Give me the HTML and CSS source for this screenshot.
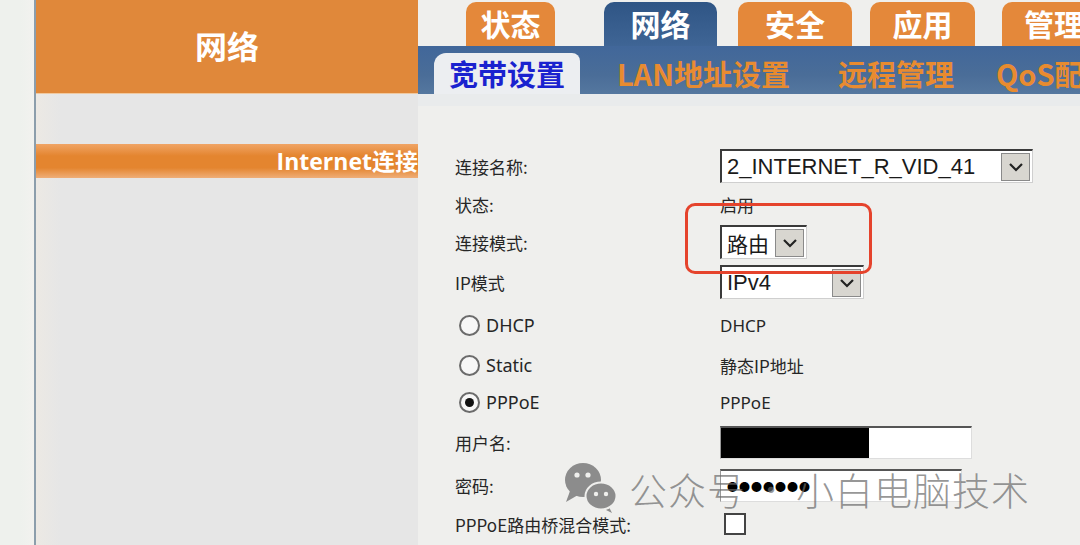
FILE: index.html
```html
<!DOCTYPE html>
<html lang="zh-CN">
<head>
    <meta charset="UTF-8">
    <title>宽带设置</title>
    <link rel="stylesheet" href="styles.css">
</head>
<body>
    <div class="page">
        <div class="gutter"></div>

        <aside class="side">
            <div class="side-head">网络</div>
            <div class="side-body">
                <div class="side-item">Internet连接</div>
            </div>
        </aside>

        <main class="main">
            <nav class="tabs">
                <div class="tab">状态</div>
                <div class="tab active">网络</div>
                <div class="tab">安全</div>
                <div class="tab">应用</div>
                <div class="tab">管理</div>
            </nav>
            <nav class="subtabs">
                <div class="subtab active">宽带设置</div>
                <div class="subtab">LAN地址设置</div>
                <div class="subtab">远程管理</div>
                <div class="subtab">QoS配置</div>
            </nav>
            <div class="sub-strip"></div>

            <form class="form">
                <div class="label r1">连接名称:</div>
                <div class="value r1">
                    <div class="select w-name">
                        <span>2_INTERNET_R_VID_41</span>
                        <span class="arrow"><svg width="16" height="10" viewBox="0 0 16 10"><path d="M2 2 L8 8 L14 2" fill="none" stroke="#222" stroke-width="2.2"/></svg></span>
                    </div>
                </div>

                <div class="label r2">状态:</div>
                <div class="value r2 text">启用</div>

                <div class="label r3">连接模式:</div>
                <div class="value r3">
                    <div class="select w-mode">
                        <span class="cjk">路由</span>
                        <span class="arrow"><svg width="16" height="10" viewBox="0 0 16 10"><path d="M2 2 L8 8 L14 2" fill="none" stroke="#222" stroke-width="2.2"/></svg></span>
                    </div>
                </div>

                <div class="label r4">IP模式</div>
                <div class="value r4">
                    <div class="select w-ip">
                        <span>IPv4</span>
                        <span class="arrow"><svg width="16" height="10" viewBox="0 0 16 10"><path d="M2 2 L8 8 L14 2" fill="none" stroke="#222" stroke-width="2.2"/></svg></span>
                    </div>
                </div>

                <div class="label r5 radio-row"><span class="radio"></span>DHCP</div>
                <div class="value r5 text latin">DHCP</div>

                <div class="label r6 radio-row"><span class="radio"></span>Static</div>
                <div class="value r6 text">静态IP地址</div>

                <div class="label r7 radio-row"><span class="radio checked"></span>PPPoE</div>
                <div class="value r7 text latin">PPPoE</div>

                <div class="label r8">用户名:</div>
                <div class="value r8">
                    <div class="input w-user"><span class="redact"></span></div>
                </div>

                <div class="label r9">密码:</div>
                <div class="value r9">
                    <div class="input w-pass"><span class="dots">●●●●●●●</span></div>
                </div>

                <div class="label r10">PPPoE路由桥混合模式:</div>
                <div class="value r10"><span class="checkbox"></span></div>
            </form>
        </main>

        <!-- 标注框和水印 -->
        <div class="mark-box"></div>
        <div class="watermark">
            <svg class="wx" width="60" height="56" viewBox="0 0 60 56">
                <path d="M9 31 L5 42 L17 35 Z" fill="#8c8c8c"/>
                <ellipse cx="22" cy="20" rx="18" ry="17" fill="#8c8c8c"/>
                <circle cx="16" cy="15" r="2.6" fill="#efefed"/>
                <circle cx="27" cy="15" r="2.6" fill="#efefed"/>
                <path d="M47 45 L51 53 L41 48 Z" fill="#8c8c8c"/>
                <ellipse cx="40" cy="36" rx="15.5" ry="13.5" fill="#8c8c8c" stroke="#efefed" stroke-width="2"/>
                <circle cx="35" cy="34" r="2.2" fill="#efefed"/>
                <circle cx="45" cy="34" r="2.2" fill="#efefed"/>
            </svg>
            <span class="wm-text">公众号</span>
            <span class="wm-sep">·</span>
            <span class="wm-text">小白电脑技术</span>
        </div>
    </div>
</body>
</html>
```

FILE: styles.css
```css
* {
    margin: 0;
    padding: 0;
    box-sizing: border-box;
}

body {
    width: 1080px;
    height: 545px;
    overflow: hidden;
    background-color: #edf0ec;
    font-family: "Noto Sans CJK SC", "Noto Sans", sans-serif;
}

.page {
    position: relative;
    display: flex;
    height: 545px;
}

.gutter {
    width: 34px;
    background: linear-gradient(90deg, #eef1ed 0, #eef1ed 20px, #f2f2ef 34px);
    border-right: 2px solid #8c9eac;
    flex: 0 0 36px;
}

/* 左侧菜单 */
.side {
    width: 382px;
    flex: 0 0 382px;
    display: flex;
    flex-direction: column;
    background-color: #e6e6e6;
}

.side-head {
    height: 94px;
    background-color: #e0883a;
    color: #fff;
    font-size: 32px;
    font-weight: bold;
    display: flex;
    align-items: center;
    justify-content: center;
    padding-bottom: 4px;
    border-bottom: 1px solid #f0c9a0;
}

.side-body {
    flex: 1;
    padding-top: 50px;
    background: linear-gradient(90deg, #ece9e4 0, #e6e6e6 24px);
}

.side-item {
    height: 34px;
    background: linear-gradient(#f0a465, #e4852f 35%, #e4852f 70%, #efae78);
    color: #fff;
    font-family: "Open Sans", "Noto Sans CJK SC", sans-serif;
    font-size: 23px;
    font-weight: bold;
    text-align: right;
    line-height: 34px;
    white-space: nowrap;
    overflow: hidden;
}

/* 右侧内容 */
.main {
    flex: 1;
    background-color: #efefed;
    display: flex;
    flex-direction: column;
}

.tabs {
    height: 46px;
    display: flex;
    align-items: flex-end;
    padding-left: 48px;
    white-space: nowrap;
    overflow: hidden;
}

.tab {
    flex: 0 0 auto;
    height: 44px;
    background-color: #e4883a;
    border-radius: 10px 10px 0 0;
    color: #fff;
    font-size: 30px;
    font-weight: bold;
    display: flex;
    align-items: center;
    justify-content: center;
    padding-bottom: 2px;
}

.tab:nth-child(1) { width: 89px; margin-right: 49px; }
.tab:nth-child(2) { width: 113px; margin-right: 21px; }
.tab:nth-child(3) { width: 114px; margin-right: 18px; }
.tab:nth-child(4) { width: 105px; margin-right: 27px; }
.tab:nth-child(5) { width: 110px; justify-content: flex-start; padding-left: 22px; }

.tab.active {
    background: linear-gradient(#2f5585, #3f6595);
}

.subtabs {
    height: 48px;
    background: linear-gradient(#41679a, #4a6d98 60%, #55779f);
    display: flex;
    align-items: flex-end;
    padding-left: 16px;
    white-space: nowrap;
    overflow: hidden;
}

.subtab {
    flex: 0 0 auto;
    height: 41px;
    line-height: 40px;
    color: #e88b30;
    font-size: 29px;
    font-weight: bold;
}

.subtab:nth-child(2) { margin-left: 37px; }
.subtab:nth-child(3) { margin-left: 48px; }
.subtab:nth-child(4) { margin-left: 42px; }

.subtab.active {
    width: 146px;
    background-color: #eceef1;
    border-radius: 12px 8px 0 0;
    color: #1a22cf;
    text-align: center;
}

.sub-strip {
    height: 12px;
    background-color: #e9ebec;
}

/* 表单 */
.form {
    display: grid;
    grid-template-columns: 265px 1fr;
    grid-template-rows: 36px 40px 36px 44px 42px 38px 36px 44px 42px 36px;
    padding: 42px 0 0 37px;
    color: #262626;
    font-size: 17px;
}

.label,
.value {
    display: flex;
    align-items: center;
}

.text {
    font-size: 17px;
}

.latin,
.radio-row {
    font-family: "Noto Sans", "Noto Sans CJK SC", sans-serif;
}

.radio-row {
    font-size: 18px;
    padding-left: 4px;
}

.radio {
    width: 21px;
    height: 21px;
    border-radius: 50%;
    border: 2px solid #6b6b6b;
    background-color: #f7f7f7;
    margin-right: 6px;
    display: inline-flex;
    align-items: center;
    justify-content: center;
}

.radio.checked::after {
    content: "";
    width: 9px;
    height: 9px;
    border-radius: 50%;
    background-color: #111;
}

.select {
    height: 34px;
    background-color: #fff;
    border-top: 2px solid #3a3a3a;
    border-left: 2px solid #3a3a3a;
    border-right: 1px solid #cfcfcf;
    border-bottom: 1px solid #cfcfcf;
    display: flex;
    align-items: center;
    justify-content: space-between;
    padding-left: 5px;
    padding-right: 2px;
    font-family: "Liberation Sans", Arial, sans-serif;
    font-size: 22px;
    color: #1a1a1a;
}

.select .cjk {
    font-family: "Noto Sans CJK SC", sans-serif;
    font-size: 21px;
}

.arrow {
    width: 29px;
    height: 28px;
    background-color: #d8d6d0;
    border: 1px solid #8a8a8a;
    display: flex;
    align-items: center;
    justify-content: center;
}

.w-name { width: 313px; }
.w-mode { width: 87px; }
.w-ip { width: 144px; }

.input {
    height: 33px;
    background-color: #fff;
    border-top: 2px solid #555;
    border-left: 1px solid #999;
    border-right: 1px solid #ddd;
    border-bottom: 1px solid #ddd;
    display: flex;
    align-items: center;
}

.w-user { width: 252px; align-items: stretch; }
.w-pass { width: 242px; }

.redact {
    width: 148px;
    background-color: #000;
}

.dots {
    font-size: 11px;
    letter-spacing: 1px;
    padding-left: 6px;
    color: #000;
}

.checkbox {
    width: 22px;
    height: 22px;
    border: 2px solid #444;
    background-color: #fff;
    margin-left: 4px;
}

/* 红框标注 */
.mark-box {
    position: absolute;
    left: 685px;
    top: 203px;
    width: 187px;
    height: 71px;
    border: 3px solid #e5432c;
    border-radius: 10px;
}

/* 水印 */
.watermark {
    position: absolute;
    left: 561px;
    top: 460px;
    display: flex;
    align-items: center;
    color: rgba(105, 105, 105, 0.7);
}

.wx {
    margin-right: 8px;
}

.wm-text {
    font-size: 38px;
    font-weight: 300;
    letter-spacing: 1px;
}

.wm-sep {
    font-size: 30px;
    margin: 0 10px;
}
```
